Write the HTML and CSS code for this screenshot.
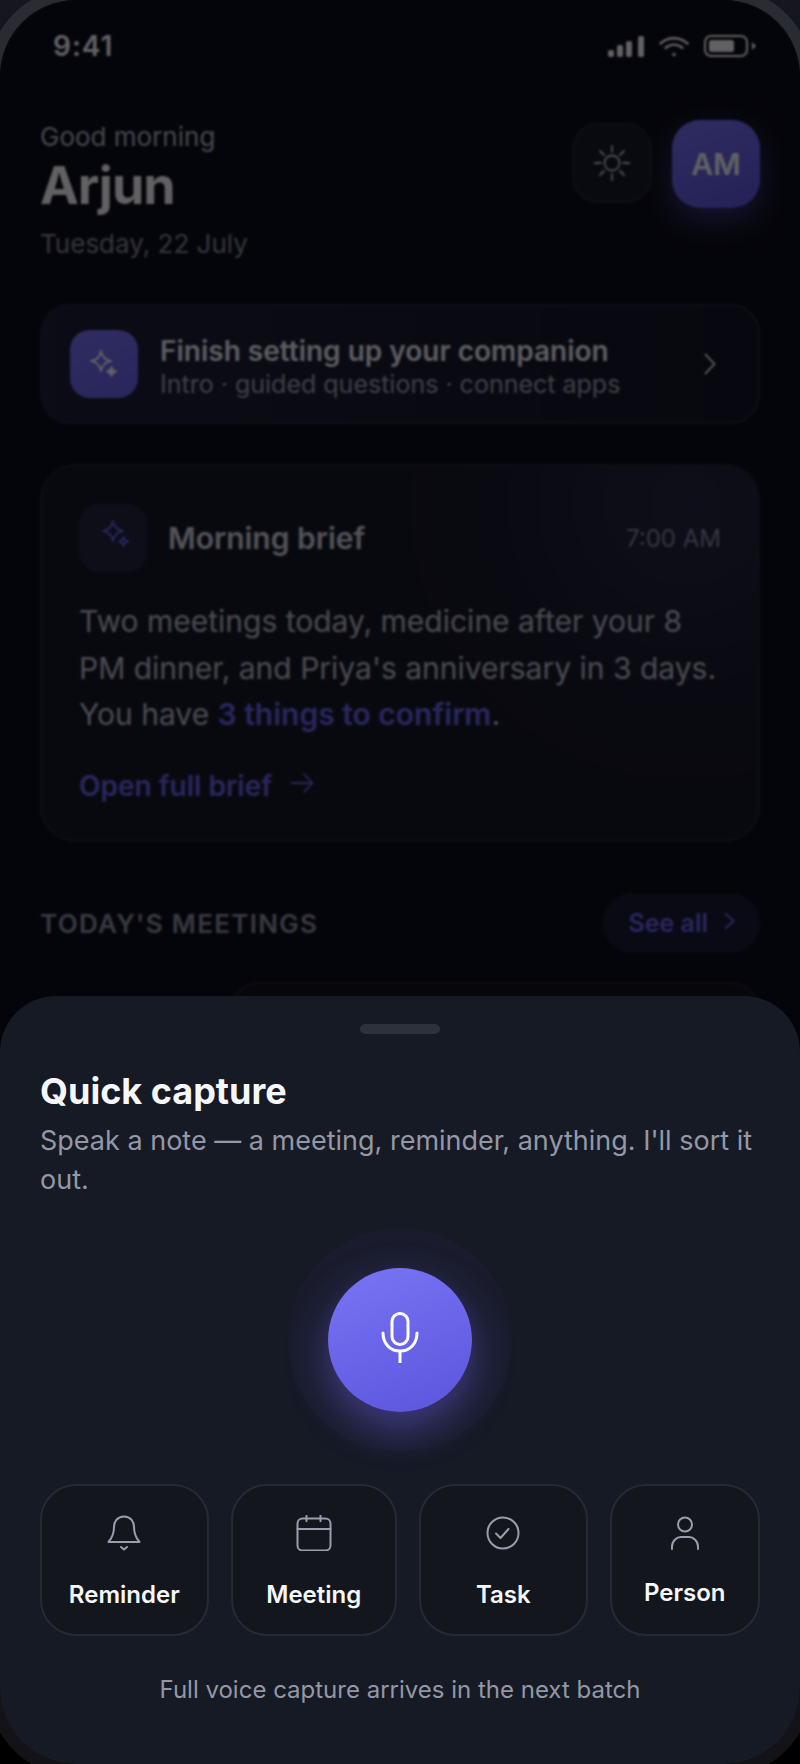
FILE: index.html
```html
<!DOCTYPE html>
<html lang="en">
<head>
  <meta charset="UTF-8">
  <meta name="viewport" content="width=device-width, initial-scale=1.0">
  <title>Home - Quick capture</title>
  <link rel="stylesheet" href="styles.css">
</head>
<body>

<div class="phone">
  <div class="screen">

    <!-- Status bar -->
    <div class="status-bar">
      <span class="status-time">9:41</span>
      <div class="status-icons">
        <svg width="36" height="21" viewBox="0 0 36 21" fill="#fff"><rect x="0" y="14" width="6" height="7" rx="2"/><rect x="9" y="9" width="6" height="12" rx="2"/><rect x="18" y="5" width="6" height="16" rx="2"/><rect x="30" y="0" width="6" height="21" rx="2"/></svg>
        <svg width="30" height="21" viewBox="0 0 30 21" fill="none" stroke="#fff" stroke-width="2.4" stroke-linecap="round"><path d="M1.5 7.500C9 .5 21 .5 28.500 7.500"/><path d="M6.500 12C11.500 7.500 18.500 7.500 23.500 12"/><circle cx="15" cy="18.500" r="1.700" fill="#fff" stroke="none"/></svg>
        <svg width="52" height="22" viewBox="0 0 52 22" fill="none"><rect x="1" y="1" width="42" height="20" rx="6" stroke="#fff" stroke-width="2"/><rect x="5" y="5" width="25" height="12" rx="2.500" fill="#fff"/><path d="M48 7l4 4-4 4z" fill="#fff"/></svg>
      </div>
    </div>

    <!-- Greeting -->
    <header class="greeting">
      <div>
        <p class="greeting-hello">Good morning</p>
        <h1 class="greeting-name">Arjun</h1>
        <p class="greeting-date">Tuesday, 22 July</p>
      </div>
      <div class="greeting-actions">
        <button class="theme-btn" type="button">
          <svg width="36" height="36" viewBox="0 0 36 36" fill="none" stroke="#c8cad2" stroke-width="1.800" stroke-linecap="round"><circle cx="18" cy="18" r="7.500"/><path d="M18 1v6M18 29v6M1 18h6M29 18h6M6 6l4 4M26 26l4 4M6 30l4-4M26 10l4-4"/></svg>
        </button>
        <div class="avatar">AM</div>
      </div>
    </header>

    <!-- Setup banner -->
    <div class="setup-card">
      <div class="setup-icon">
        <svg width="28" height="28" viewBox="0 0 28 28" fill="none" stroke="#fff" stroke-width="1.800" stroke-linejoin="round"><path d="M11 1c1 6 4 9 10 10-6 1-9 4-10 10-1-6-4-9-10-10 6-1 9-4 10-10z"/><path d="M21.500 17c.5 2.500 2 4 4.500 4.500-2.500.5-4 2-4.500 4.500-.5-2.500-2-4-4.500-4.500 2.500-.5 4-2 4.500-4.500z" fill="#fff"/></svg>
      </div>
      <div class="setup-text">
        <p class="setup-title">Finish setting up your companion</p>
        <p class="setup-sub">Intro · guided questions · connect apps</p>
      </div>
      <svg width="12" height="22" viewBox="0 0 12 22" fill="none" stroke="#fff" stroke-width="1.800" stroke-linecap="round" stroke-linejoin="round"><path d="M1.500 1.500l9 9.500-9 9.500"/></svg>
    </div>

    <!-- Morning brief -->
    <section class="brief-card">
      <div class="brief-head">
        <div class="brief-icon">
          <svg width="28" height="28" viewBox="0 0 28 28" fill="none" stroke="#6c66ee" stroke-width="1.800" stroke-linejoin="round"><path d="M11 1c1 6 4 9 10 10-6 1-9 4-10 10-1-6-4-9-10-10 6-1 9-4 10-10z"/><path d="M21.500 17c.5 2.500 2 4 4.500 4.500-2.500.5-4 2-4.500 4.500-.5-2.500-2-4-4.500-4.500 2.500-.5 4-2 4.500-4.500z"/></svg>
        </div>
        <h2 class="brief-title">Morning brief</h2>
        <span class="brief-time">7:00 AM</span>
      </div>
      <p class="brief-body">Two meetings today, medicine after your 8 PM dinner, and Priya's anniversary in 3 days. You have <strong>3 things to confirm</strong>.</p>
      <a class="brief-link">Open full brief
        <svg width="24" height="22" viewBox="0 0 24 22" fill="none" stroke="currentColor" stroke-width="1.800" stroke-linecap="round" stroke-linejoin="round"><path d="M1.500 11h21M14 2l8.500 9-8.500 9"/></svg>
      </a>
    </section>

    <!-- Meetings -->
    <div class="section-head">
      <h3 class="section-title">TODAY'S MEETINGS</h3>
      <a class="see-all">See all
        <svg width="11" height="18" viewBox="0 0 11 18" fill="none" stroke="currentColor" stroke-width="1.800" stroke-linecap="round" stroke-linejoin="round"><path d="M1.500 1.500l8 7.500-8 7.500"/></svg>
      </a>
    </div>
    <div class="meeting-peek"></div>

    <div class="scrim"></div>

    <!-- Bottom sheet -->
    <div class="sheet">
      <div class="sheet-handle"></div>
      <h2 class="sheet-title">Quick capture</h2>
      <p class="sheet-sub">Speak a note — a meeting, reminder, anything. I'll sort it out.</p>

      <div class="mic-wrap">
        <button class="mic-btn" type="button">
          <svg width="40" height="52" viewBox="0 0 40 52" fill="none" stroke="#fff" stroke-width="3" stroke-linecap="round"><rect x="12" y="1.500" width="16" height="31" rx="8"/><path d="M3 21c0 10.500 7 18 17 18s17-7.500 17-18"/><path d="M20 39v12" stroke-linecap="butt"/></svg>
        </button>
      </div>

      <div class="capture-types">
        <button class="capture-btn" type="button">
          <svg width="36" height="36" viewBox="0 0 36 36" fill="none" stroke="#9a9dab" stroke-width="2" stroke-linecap="round" stroke-linejoin="round"><path d="M18 1.500C11.500 1.500 8 6.500 8 12c0 7-2 11-5.500 15h31C30 23 28 19 28 12c0-5.500-3.500-10.500-10-10.500z"/><path d="M15 32l3 2.500 3-2.500"/></svg>
          <span>Reminder</span>
        </button>
        <button class="capture-btn" type="button">
          <svg width="36" height="36" viewBox="0 0 36 36" fill="none" stroke="#9a9dab" stroke-width="2" stroke-linecap="round" stroke-linejoin="round"><rect x="1.500" y="3.500" width="33" height="32" rx="5"/><path d="M1.500 14h33M10.500 .8v5.500M24.500 .8v5.500"/></svg>
          <span>Meeting</span>
        </button>
        <button class="capture-btn" type="button">
          <svg width="36" height="36" viewBox="0 0 36 36" fill="none" stroke="#9a9dab" stroke-width="2" stroke-linecap="round" stroke-linejoin="round"><circle cx="18" cy="18" r="15.500"/><path d="M11 18.500l4.500 4.500 8-9"/></svg>
          <span>Task</span>
        </button>
        <button class="capture-btn capture-btn-person" type="button">
          <svg width="36" height="36" viewBox="0 0 36 36" fill="none" stroke="#9a9dab" stroke-width="2" stroke-linecap="round" stroke-linejoin="round"><circle cx="18" cy="9.500" r="7"/><path d="M5 34v-2.500C5 26 9.500 22 14 22h8c4.500 0 9 4 9 9.500V34"/></svg>
          <span>Person</span>
        </button>
      </div>

      <p class="sheet-note">Full voice capture arrives in the next batch</p>
    </div>

  </div>
</div>

</body>
</html>
```

FILE: styles.css
```css
* {
  box-sizing: border-box;
}

html, body {
  margin: 0;
  padding: 0;
}

body {
  width: 800px;
  height: 1764px;
  overflow: hidden;
  background: #000;
  font-family: Inter, "Liberation Sans", sans-serif;
  color: #fff;
}

h1, h2, h3, p {
  margin: 0;
  font-weight: inherit;
}

button {
  font-family: inherit;
  color: inherit;
  border: none;
  padding: 0;
}

/* Device frame: only its corners show around the screen */
.phone {
  position: relative;
  width: 800px;
  height: 1764px;
  overflow: hidden;
  background: linear-gradient(#15161e, #000);
}

.phone::before {
  content: "";
  position: absolute;
  inset: -12px;
  border-radius: 88px;
  background: linear-gradient(#2a2c33, #131317);
}

.screen {
  position: relative;
  width: 800px;
  height: 1764px;
  overflow: hidden;
  padding: 0 40px;
  border-radius: 76px;
  background: #0d0e15;
}

/* Status bar */
.status-bar {
  display: flex;
  justify-content: space-between;
  align-items: center;
  height: 44px;
  margin-top: 24px;
  padding: 0 4px 0 13px;
}

.status-time {
  font-size: 28px;
  font-weight: 600;
  letter-spacing: 1px;
}

.status-icons {
  display: flex;
  align-items: center;
  gap: 15px;
}

/* Greeting */
.greeting {
  display: flex;
  justify-content: space-between;
  margin-top: 52px;
}

.greeting-hello {
  font-size: 26px;
  line-height: 34px;
  color: #b6b9c4;
}

.greeting-name {
  margin-top: 3px;
  font-size: 52px;
  font-weight: 700;
  line-height: 58px;
  letter-spacing: -1px;
}

.greeting-date {
  margin-top: 12px;
  font-size: 26px;
  line-height: 34px;
  color: #8a8d9b;
}

.greeting-actions {
  display: flex;
  align-items: flex-start;
  gap: 20px;
}

.theme-btn {
  display: flex;
  align-items: center;
  justify-content: center;
  width: 80px;
  height: 80px;
  margin-top: 3px;
  border: 2px solid #23252d;
  border-radius: 26px;
  background: #1a1c24;
}

.avatar {
  display: flex;
  align-items: center;
  justify-content: center;
  width: 88px;
  height: 88px;
  border-radius: 28px;
  background: linear-gradient(160deg, #7a74f5, #5e58e0);
  box-shadow: 0 12px 30px rgba(108, 100, 240, 0.45);
  font-size: 30px;
  font-weight: 600;
}

/* Setup banner */
.setup-card {
  display: flex;
  align-items: center;
  height: 120px;
  margin-top: 43px;
  padding: 0 42px 0 28px;
  border: 2px solid #23263a;
  border-radius: 30px;
  background: linear-gradient(90deg, #1e2035, #141622);
}

.setup-icon {
  display: flex;
  align-items: center;
  justify-content: center;
  width: 68px;
  height: 68px;
  flex-shrink: 0;
  border-radius: 20px;
  background: linear-gradient(160deg, #7a74f5, #6a64ec);
}

.setup-text {
  flex: 1;
  margin-left: 22px;
  padding-top: 4px;
}

.setup-title {
  font-size: 28px;
  font-weight: 600;
  line-height: 36px;
  color: #f2f3f7;
}

.setup-sub {
  font-size: 25px;
  line-height: 31px;
  color: #a4a7b4;
}

/* Morning brief */
.brief-card {
  height: 378px;
  margin-top: 40px;
  padding: 38px 37px 0;
  border: 2px solid #23252f;
  border-radius: 36px;
  background: radial-gradient(circle at 90% 10%, #25273e 0, #1b1c2a 170px, #171922 300px);
}

.brief-head {
  display: flex;
  align-items: center;
}

.brief-icon {
  display: flex;
  align-items: center;
  justify-content: center;
  width: 68px;
  height: 68px;
  border-radius: 20px;
  background: #23253a;
}

.brief-icon svg {
  margin: 0 0 8px 6px;
}

.brief-title {
  flex: 1;
  margin-left: 21px;
  font-size: 30px;
  font-weight: 600;
  color: #d8dae2;
}

.brief-time {
  font-size: 24px;
  color: #8a8d9b;
}

.brief-body {
  margin-top: 26px;
  font-size: 30px;
  line-height: 46.500px;
  color: #c1c4cf;
}

.brief-body strong {
  font-weight: 600;
  color: #6c66ee;
}

.brief-link {
  display: flex;
  align-items: center;
  gap: 18px;
  margin-top: 31px;
  font-size: 28px;
  font-weight: 600;
  color: #6c66ee;
}

.brief-link svg {
  margin-bottom: 6px;
}

/* Meetings */
.section-head {
  display: flex;
  justify-content: space-between;
  align-items: center;
  margin-top: 51px;
}

.section-title {
  font-size: 26px;
  font-weight: 600;
  letter-spacing: 1.300px;
  color: #9598a6;
}

.see-all {
  display: flex;
  align-items: center;
  gap: 16px;
  height: 60px;
  padding: 0 25px;
  border-radius: 30px;
  background: #1a1b30;
  font-size: 25px;
  font-weight: 600;
  color: #6c66ee;
}

.see-all svg {
  margin-bottom: 4px;
}

.meeting-peek {
  width: 530px;
  height: 60px;
  margin: 29px 0 0 190px;
  border: 2px solid #23252f;
  border-radius: 36px;
  background: #10111a;
}

/* Overlay */
.scrim {
  position: absolute;
  inset: 0;
  background: rgba(0, 0, 4, 0.62);
  backdrop-filter: blur(1px);
}

.sheet {
  position: absolute;
  left: 0;
  right: 0;
  bottom: 0;
  height: 768px;
  padding: 28px 40px 0;
  border-radius: 56px 56px 0 0;
  background: #161a25;
}

.sheet-handle {
  width: 80px;
  height: 10px;
  margin: 0 auto;
  border-radius: 5px;
  background: #2d313c;
}

.sheet-title {
  margin-top: 36px;
  font-size: 36px;
  font-weight: 700;
  line-height: 42px;
  color: #f6f7fa;
}

.sheet-sub {
  margin-top: 9px;
  font-size: 27px;
  line-height: 39px;
  color: #9498a6;
}

.mic-wrap {
  display: flex;
  justify-content: center;
  margin-top: 69px;
}

.mic-btn {
  display: flex;
  align-items: center;
  justify-content: center;
  width: 144px;
  height: 144px;
  border-radius: 50%;
  background: linear-gradient(160deg, #7a74f5, #5a55dc);
  box-shadow: 0 0 0 40px rgba(108, 100, 240, 0.045), 0 16px 40px rgba(110, 100, 240, 0.45);
}

.mic-btn svg {
  margin-bottom: 4px;
}

.capture-types {
  display: grid;
  grid-template-columns: 168.500px 166.500px 168.500px 150.500px;
  gap: 22px;
  margin-top: 72px;
}

.capture-btn {
  display: flex;
  flex-direction: column;
  align-items: center;
  height: 152px;
  padding-top: 29px;
  border: 2px solid #262a36;
  border-radius: 36px;
  background: #14161d;
  font-size: 24px;
  font-weight: 600;
  color: #f6f7fa;
}

.capture-btn span {
  margin-top: 29px;
}

.capture-btn-person span {
  margin-top: 27px;
}

.sheet-note {
  margin-top: 39px;
  font-size: 24px;
  text-align: center;
  color: #9498a6;
}
```
